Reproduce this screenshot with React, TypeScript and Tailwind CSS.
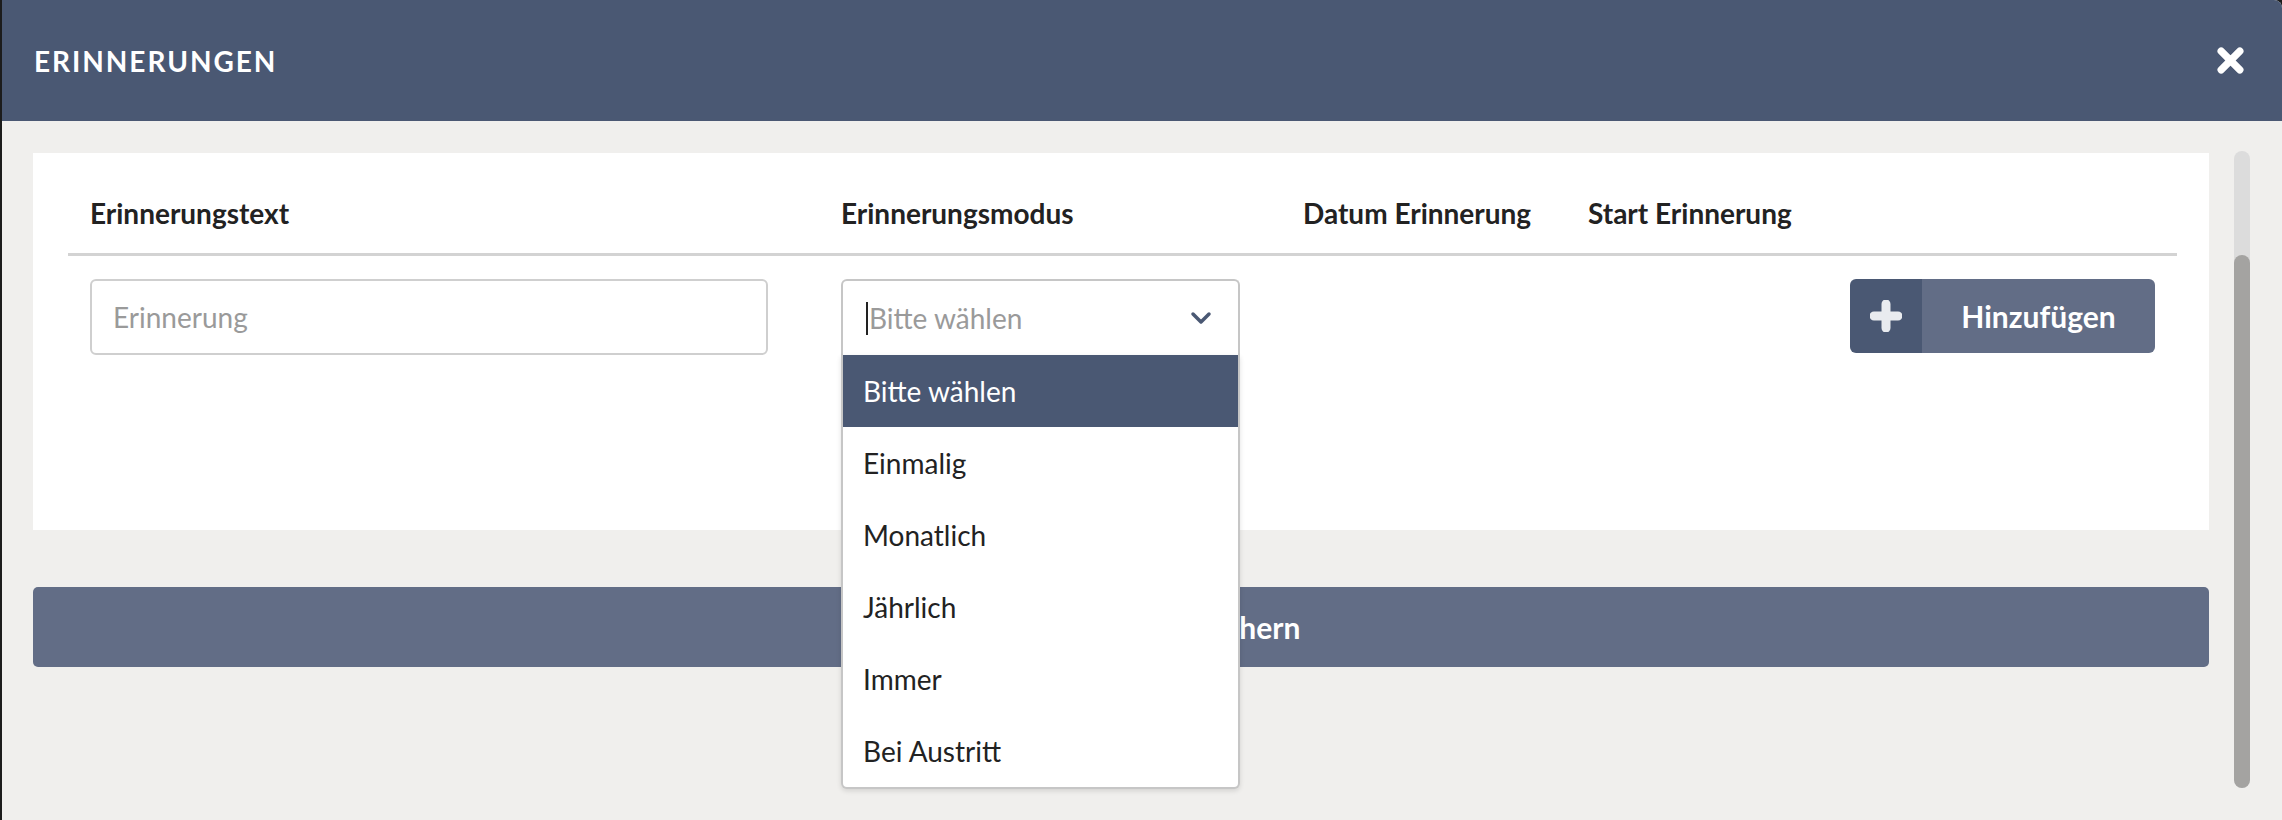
import React from "react";

const font = { fontFamily: "Lato, 'Noto Sans', sans-serif" };

function CloseIcon() {
  return (
    <svg width="27" height="27" viewBox="0 0 26 26" aria-hidden="true">
      <path
        d="M4 4 L22 22 M22 4 L4 22"
        stroke="#ffffff"
        strokeWidth="7"
        strokeLinecap="round"
        fill="none"
      />
    </svg>
  );
}

function PlusIcon() {
  return (
    <svg width="32" height="32" viewBox="0 0 32 32" aria-hidden="true">
      <path
        d="M16 4 V28 M4 16 H28"
        stroke="#e9ebef"
        strokeWidth="9"
        strokeLinecap="round"
        fill="none"
      />
    </svg>
  );
}

function Chevron() {
  return (
    <svg width="22" height="14" viewBox="0 0 22 14" aria-hidden="true">
      <path
        d="M3 3 L11 11 L19 3"
        stroke="#4a5873"
        strokeWidth="3.5"
        strokeLinecap="round"
        strokeLinejoin="round"
        fill="none"
      />
    </svg>
  );
}

const options = ["Bitte wählen", "Einmalig", "Monatlich", "Jährlich", "Immer", "Bei Austritt"];

export default function App() {
  return (
    <div className="w-full h-[820px] bg-[#1c1c1c] overflow-hidden" style={font}>
      <div className="ml-[2px] h-[820px] bg-[#f0efed] rounded-tr-[8px] overflow-hidden flex flex-col">
        {/* Header */}
        <div className="h-[121px] shrink-0 bg-[#4a5873] flex items-center justify-between pl-[32px] pr-[38px]">
          <div className="text-white text-[28px] font-bold tracking-[0.07em] leading-none">ERINNERUNGEN</div>
          <CloseIcon />
        </div>

        {/* Body */}
        <div className="flex flex-row">
          <div className="ml-[31px] w-[2176px] pt-[32px] flex flex-col">
            {/* Card */}
            <div className="bg-white h-[377px] pt-[20px] pl-[35px] pr-[33px]">
              <div className="grid grid-cols-[751px_462px_285px_262px_1fr]">
                {["Erinnerungstext", "Erinnerungsmodus", "Datum Erinnerung", "Start Erinnerung", ""].map((h, i) => (
                  <div
                    key={i}
                    className="px-[22px] py-[22px] leading-[36px] text-[28px] font-bold text-[#222222] border-b-[3px] border-[#d3d3d3] whitespace-nowrap"
                  >
                    {h || "\u00a0"}
                  </div>
                ))}

                {/* Row */}
                <div className="px-[22px] pt-[23px]">
                  <div className="w-[678px] h-[76px] rounded-[6px] border-2 border-[#cfcfcf] flex items-center pl-[21px] text-[28px] text-[#9a9a9a]">
                    Erinnerung
                  </div>
                </div>
                <div className="px-[22px] pt-[23px]">
                  <div className="relative w-[399px]">
                    <div className="h-[76px] rounded-t-[6px] border-2 border-b-0 border-[#c6c6c6] bg-white flex items-center justify-between pl-[23px] pr-[26px]">
                      <div className="flex items-center">
                        <span className="w-[2px] h-[33px] bg-[#222222] mr-[1px]" />
                        <span className="text-[28px] text-[#9a9a9a]">Bitte wählen</span>
                      </div>
                      <Chevron />
                    </div>
                    <div className="absolute left-0 top-[76px] w-[399px] bg-white border-2 border-t-0 border-[#c6c6c6] rounded-b-[6px] shadow-[0_2px_5px_rgba(0,0,0,0.12)] z-10 overflow-hidden">
                      {options.map((o, i) => (
                        <div
                          key={o}
                          className={
                            i === 0
                              ? "h-[72px] flex items-center pl-[20px] text-[28px] bg-[#4a5873] text-white"
                              : "h-[72px] flex items-center pl-[20px] text-[28px] text-[#222222]"
                          }
                        >
                          {o}
                        </div>
                      ))}
                    </div>
                  </div>
                </div>
                <div />
                <div />
                <div className="px-[22px] pt-[23px] flex justify-end">
                  <div className="w-[305px] h-[74px] rounded-[6px] overflow-hidden flex">
                    <div className="w-[72px] bg-[#4a5873] flex items-center justify-center">
                      <PlusIcon />
                    </div>
                    <div className="flex-1 bg-[#626d86] flex items-center justify-center text-white text-[30px] font-bold">
                      Hinzufügen
                    </div>
                  </div>
                </div>
              </div>
            </div>

            {/* Save button */}
            <div className="mt-[57px] h-[80px] rounded-[5px] bg-[#626d86] flex items-center justify-center pr-[16px] text-white text-[30px] font-bold">
              Alle Erinnerungen speichern
            </div>
          </div>

          {/* Scrollbar */}
          <div className="ml-[25px] mt-[30px] w-[16px] h-[637px] rounded-full bg-[#dcdcdc] flex flex-col justify-end">
            <div className="h-[533px] rounded-full bg-[#a4a3a1]" />
          </div>
        </div>
      </div>
    </div>
  );
}
